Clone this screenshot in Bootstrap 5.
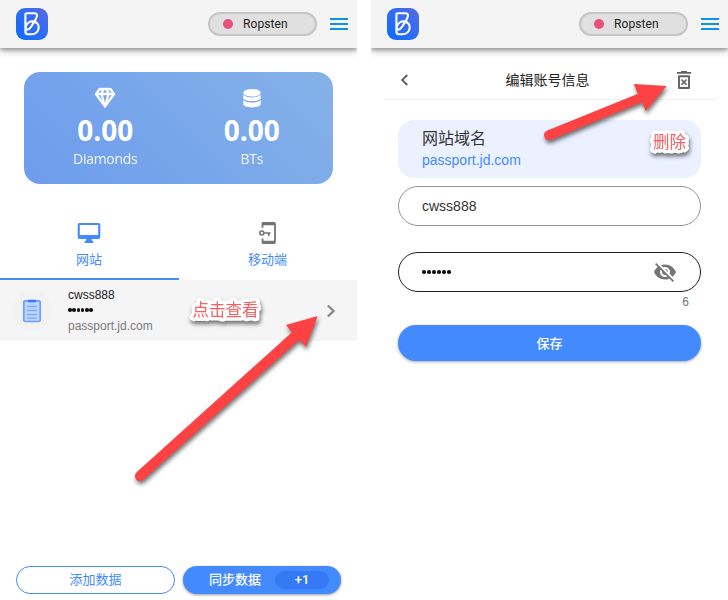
<!DOCTYPE html>
<html lang="zh-CN">
<head>
<meta charset="utf-8">
<title>BitKeys</title>
<link href="https://cdn.jsdelivr.net/npm/bootstrap@5.3.0/dist/css/bootstrap.min.css" rel="stylesheet">
<style>
body{font-family:"Liberation Sans","Noto Sans CJK SC",sans-serif;width:728px;height:600px;overflow:hidden;background:#fff;color:#222}
svg{display:block}
.stage{height:600px;gap:14px}
.phone{width:357px;height:600px;overflow:hidden}
.topbar{height:48px;background:#f4f4f4;padding:0 9px 0 16px;box-shadow:0 2px 4px rgba(0,0,0,.34),0 4px 8px rgba(0,0,0,.16);position:relative}
.net{width:109px;height:24px;border:2px solid #c4c4c4;background:#e0e0e0;border-radius:12px;padding-left:13px;margin-right:13px;font:12px/20px Roboto,sans-serif;letter-spacing:.1px}
.dot{width:10px;height:10px;background:#e9507b;margin-right:10px}
.balance{margin:24px 24px 0;height:112px;border-radius:16px;background:linear-gradient(45deg,#6d9ced,#85b2e8);color:#fff;font-family:"Open Sans",sans-serif;padding:14px 8px 0}
.balance>div{width:50%}
.amount{font-size:28px;font-weight:700;line-height:34px;margin-top:3px}
.unit{font-size:14px;line-height:20px;font-weight:400;opacity:.9;letter-spacing:-.3px;margin-top:2px}
.tabbar{height:72px;margin-top:24px}
.tabitem{height:72px;border-bottom:2px solid transparent;color:#448aff;font-size:13px;line-height:18px;padding:13px 1px 0 0}
.tabitem span{margin-top:6px}
.tabitem.first{flex:0 0 179px;border-color:#448aff}
.entry{height:61px;background:#f5f5f5;padding:0 20px 0 12px}
.avatar{width:40px;height:40px;background:#f2f2f2;margin-right:16px}
.entry-text{font-size:12px;line-height:16px;color:#222;margin-top:-1px}
.entry-text .host{color:#7b7b7b;line-height:16px}
.dots{display:flex;gap:.7px;height:15px;align-items:center}
.dots i{width:3.6px;height:3.6px;border-radius:50%;background:#111}
.actions{padding:0 16px 6px;gap:8px}
.pill{height:28px;border-radius:14px;font-size:13px;padding:0;line-height:26px}
.pill-outline{width:159px;border:1px solid #448aff;color:#448aff}
.pill-fill{width:158px;background:#448aff;color:#fff;font-weight:500;padding-left:14px;box-shadow:0 1px 3px rgba(0,0,0,.4)}
.plus{width:54px;height:18px;border-radius:9px;background:#3579f5;font:500 13px/18px Roboto,sans-serif;margin-left:14px}
.pagehead{height:40px;margin:12px 11px 0 13px;padding:0 26px 0 14px;border-bottom:1px solid #f0f0f0;font-size:14px}
.pagehead span{padding-left:8px;line-height:20px}
.form-area{margin:20px 27px 0}
.site{height:58px;border-radius:16px;background:#ebf1ff;padding:8px 24px 0}
.site .label{font-size:16px;line-height:22px;color:#333}
.site .value{font-size:14px;line-height:20px;color:#448aff}
.field{height:40px;border:1px solid #949494;border-radius:20px;padding:0 23px;font-size:14px;color:#333;margin-top:8px}
.field.pw{border-color:#222;margin-top:26px}
.field .dots{gap:1.500px}
.count{font-size:12px;line-height:14px;color:#757575;margin:3px 12px 0 0}
.save{height:36px;border-radius:18px;background:#448aff;color:#fff;font-size:13px;font-weight:500;margin-top:16px;padding:2px 0 0;box-shadow:0 1px 3px rgba(0,0,0,.35)}
.notes{position:absolute;left:0;top:0;pointer-events:none}
.notes text{font-family:"Noto Sans CJK SC",sans-serif;font-size:16.5px;fill:#fb5d60;stroke:#fff;stroke-width:7px;stroke-linejoin:round;paint-order:stroke}
.notes g{filter:drop-shadow(1px 3px 2px rgba(0,0,0,.55))}
</style>
<script src="https://cdn.jsdelivr.net/npm/bootstrap@5.3.0/dist/js/bootstrap.bundle.min.js"></script>
</head>
<body>
<svg width="0" height="0" class="position-absolute" aria-hidden="true">
  <defs>
    <linearGradient id="lg" x1="0" y1="1" x2="1" y2="0"><stop offset="0" stop-color="#0b6bff"/><stop offset=".5" stop-color="#2f6cf5"/><stop offset="1" stop-color="#5a69df"/></linearGradient>
    <symbol id="logo" viewBox="0 0 32 32">
      <rect width="32" height="32" rx="9" fill="url(#lg)"/>
      <path d="M9.400 22V6.600Q9.400 5.200 11 5.200H18.800Q21.400 5.400 20.900 8.200Q20 11.200 18.300 13.600L15.400 18.200Q13.200 21.600 11 21.600Q9.200 21.400 9.800 18.600C10.900 15 14 13 17 13.400C20.800 13.900 23.200 16.700 22.700 20.100C22.200 23.700 19.400 26.300 15.500 26.300H12Q9.400 26.300 9.400 23.800Z" fill="none" stroke="#fff" stroke-width="2.100" stroke-linejoin="round"/>
    </symbol>
  </defs>
</svg>
<main class="stage d-flex position-relative">
  <section class="phone d-flex flex-column">
    <header class="topbar d-flex align-items-center flex-shrink-0">
      <svg width="32" height="32" class="me-auto"><use href="#logo"/></svg>
      <div class="net d-flex align-items-center"><span class="dot rounded-circle"></span>Ropsten</div>
      <svg width="18" height="12"><path d="M0 1h18M0 6h18M0 11h18" stroke="#0b93ea" stroke-width="2"/></svg>
    </header>
    <div class="balance d-flex text-center">
      <div class="d-flex flex-column align-items-center">
        <svg width="22" height="24" viewBox="0 0 22 24"><path fill="#fff" stroke="#fff" stroke-width=".4" fill-rule="evenodd" d="M5 2h12l4.200 6.200L11 22 .8 8.200zM6.300 4L4.200 7h2.500l1.300-3zm3.900 0L9 7h4l-1.200-3zm3.800 0l1.300 3h2.500l-2.100-3zM4 9l4.800 6.500L6.800 9zm4.800 0L11 17.400 13.200 9zm6.400 0l-2 6.500L18 9z"/></svg>
        <div class="amount">0.00</div><div class="unit">Diamonds</div>
      </div>
      <div class="d-flex flex-column align-items-center">
        <svg width="18" height="24" viewBox="0 0 18 24"><g fill="#fff"><ellipse cx="9" cy="6.800" rx="8.700" ry="3.800"/><path d="M.3 8.500c1.500 2 4.700 2.900 8.700 2.900s7.200-.9 8.700-2.900V12c0 2-3.900 3.400-8.700 3.400S.3 14 .3 12zM.3 14.100c1.500 1.700 4.700 2.400 8.700 2.400s7.200-.7 8.700-2.400v4c0 2-3.900 3.300-8.700 3.300S.3 20.100.3 18.100z"/><path d="M.3 13.200c1.500 1.700 4.700 2.500 8.700 2.500s7.200-.8 8.700-2.500" stroke="#79a8eb" stroke-width="1" fill="none"/></g></svg>
        <div class="amount">0.00</div><div class="unit">BTs</div>
      </div>
    </div>
    <nav class="tabbar d-flex">
      <div class="tabitem first d-flex flex-column align-items-center"><svg width="24" height="24" viewBox="0 0 24 24"><path fill="#448aff" fill-rule="evenodd" d="M2.500 2h19Q23.300 2 23.300 3.800v12.400Q23.300 18 21.500 18H14.500l1 2.200 1 .6V22h-9v-1.200l1-.6 1-2.200H2.500Q.7 18 .7 16.200V3.800Q.7 2 2.500 2zm.3 2v10h18.400V4z"/></svg><span>网站</span></div>
      <div class="tabitem flex-fill d-flex flex-column align-items-center"><svg width="24" height="24" viewBox="0 0 24 24" fill="none" stroke="#737373" stroke-width="1.800"><path d="M6.500 6.800V2.200Q6.500 2 7 2H18Q19 2 19 3V21Q19 22 18 22H7Q6.500 22 6.500 21.500V17.500M6.500 3.300H19M6.500 20.700H19"/><circle cx="5.800" cy="12" r="2" stroke-width="1.600"/><path stroke-width="1.700" d="M7.800 12H14.500M12.800 12v3"/></svg><span>移动端</span></div>
    </nav>
    <div class="entry d-flex align-items-center flex-shrink-0">
      <div class="avatar rounded-circle d-flex align-items-center justify-content-center"><svg width="20" height="24" viewBox="0 0 20 24"><rect x="1.800" y="1.800" width="16.400" height="20.700" rx="1.500" fill="#bed5fd" stroke="#68a0fd" stroke-width="1.700"/><path d="M6 2h8" stroke="#327bff" stroke-width="2.500"/><path d="M5 7.500h10M5 11.500h10M5 15.500h10M5 19.200h10" stroke="#78aafe" stroke-width="1.300"/></svg></div>
      <div class="entry-text me-auto"><div>cwss888</div><div class="dots"><i></i><i></i><i></i><i></i><i></i><i></i></div><div class="host">passport.jd.com</div></div>
      <svg width="12" height="14" viewBox="0 0 12 14"><path d="M2.800 1.500L8.600 7l-5.800 5.500" fill="none" stroke="#858585" stroke-width="2.200"/></svg>
    </div>
    <div class="actions d-flex mt-auto">
      <button class="btn pill pill-outline">添加数据</button>
      <button class="btn pill pill-fill d-flex align-items-center justify-content-center">同步数据<span class="plus">+1</span></button>
    </div>
  </section>
  <section class="phone">
    <header class="topbar d-flex align-items-center">
      <svg width="32" height="32" class="me-auto"><use href="#logo"/></svg>
      <div class="net d-flex align-items-center"><span class="dot rounded-circle"></span>Ropsten</div>
      <svg width="18" height="12"><path d="M0 1h18M0 6h18M0 11h18" stroke="#0b93ea" stroke-width="2"/></svg>
    </header>
    <div class="pagehead d-flex align-items-center justify-content-between">
      <svg width="12" height="14" viewBox="0 0 12 14"><path d="M9.300 2L4.200 7l5.100 5" fill="none" stroke="#616161" stroke-width="1.800"/></svg>
      <span>编辑账号信息</span>
      <svg width="14" height="18" viewBox="0 0 14 18"><path d="M0 1.900h14M4 .8h6" stroke="#616161" stroke-width="1.700"/><path d="M2 5.200h10V17H2z" fill="none" stroke="#616161" stroke-width="1.900" stroke-linejoin="round"/><path d="M4.400 8.500l5.200 5.200M9.600 8.500l-5.200 5.200" stroke="#616161" stroke-width="1.600"/></svg>
    </div>
    <div class="form-area">
      <div class="site"><div class="label">网站域名</div><div class="value">passport.jd.com</div></div>
      <div class="field d-flex align-items-center">cwss888</div>
      <div class="field pw d-flex align-items-center justify-content-between"><div class="dots"><i></i><i></i><i></i><i></i><i></i><i></i></div>
        <svg width="24" height="24" viewBox="0 0 24 24"><path fill="#757575" d="M12 7c2.760 0 5 2.240 5 5 0 .65-.13 1.260-.36 1.830l2.920 2.920c1.510-1.260 2.700-2.890 3.430-4.750-1.730-4.390-6-7.500-11-7.500-1.400 0-2.740.25-3.980.7l2.160 2.160C10.740 7.130 11.350 7 12 7zM2 4.270l2.280 2.280.46.460C3.080 8.300 1.780 10.020 1 12c1.730 4.390 6 7.500 11 7.500 1.550 0 3.030-.3 4.380-.84l.42.420L19.730 22 21 20.730 3.270 3 2 4.270zM7.530 9.800l1.550 1.550c-.05.21-.08.43-.08.65 0 1.660 1.340 3 3 3 .22 0 .44-.03.65-.08l1.550 1.550c-.67.33-1.410.53-2.200.53-2.760 0-5-2.240-5-5 0-.79.2-1.530.53-2.200zm4.310-.78l3.150 3.150.02-.16c0-1.660-1.340-3-3-3l-.17.010z"/></svg>
      </div>
      <div class="count text-end">6</div>
      <button class="btn save w-100">保存</button>
    </div>
  </section>
  <svg class="notes" width="728" height="600">
    <g><path fill="#fd4244" d="M136.600 472.300L292 332.300 286 325 317.700 316 306 346.700 299 340 143.400 479.700A5 5 0 0 1 136.600 472.300Z"/></g>
    <g><path fill="#fd4244" d="M546.800 130.700L638 93.700 633.700 84 666.700 86 645.700 111 642 102 550.600 139.900A5 5 0 0 1 546.800 130.700Z"/></g>
    <g><text x="192.500" y="316">点击查看</text></g>
    <g><text x="653" y="147.500">删除</text></g>
  </svg>
</main>
</body>
</html>
